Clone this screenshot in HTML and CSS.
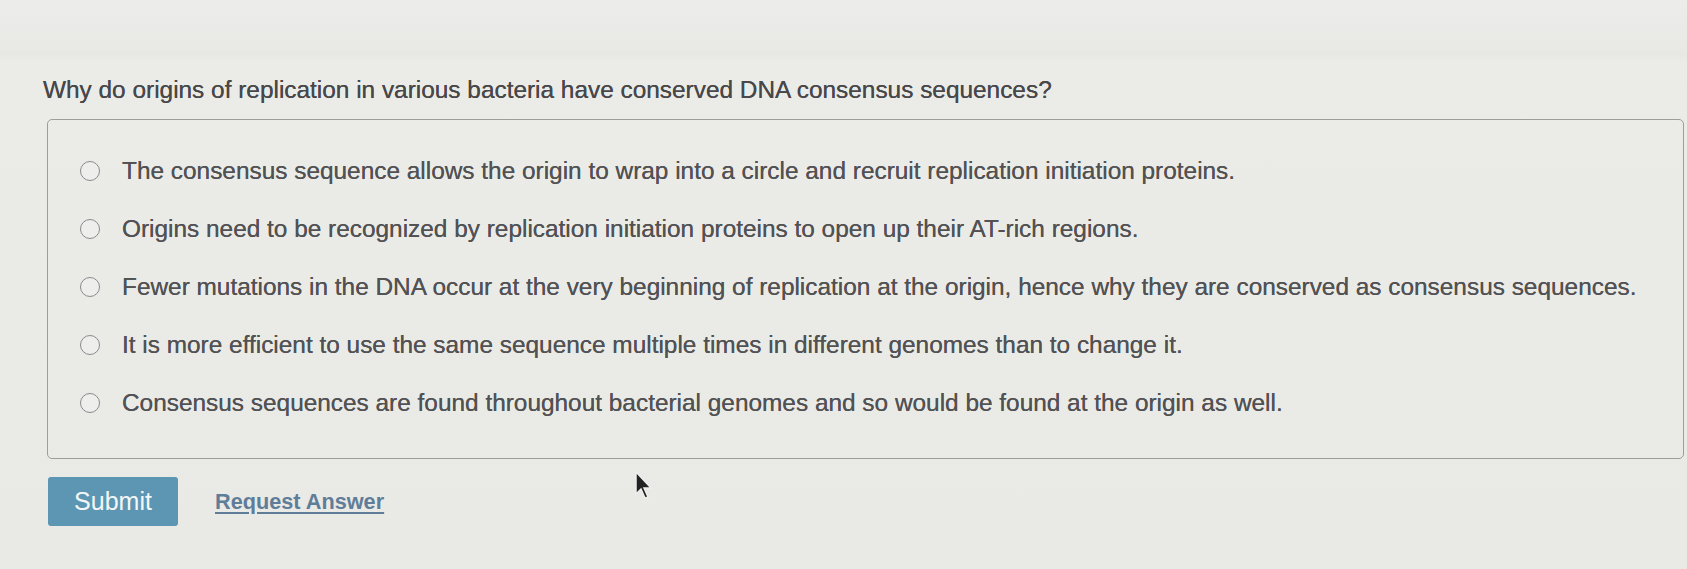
FILE: index.html
```html
<!DOCTYPE html>
<html>
<head>
<meta charset="utf-8">
<link rel="stylesheet" href="styles.css">
</head>
<body>
<div class="page">
  <p class="question">Why do origins of replication in various bacteria have conserved DNA consensus sequences?</p>
  <div class="choices">
    <label class="choice"><span class="radio"></span><span class="txt">The consensus sequence allows the origin to wrap into a circle and recruit replication initiation proteins.</span></label>
    <label class="choice"><span class="radio"></span><span class="txt">Origins need to be recognized by replication initiation proteins to open up their AT-rich regions.</span></label>
    <label class="choice"><span class="radio"></span><span class="txt">Fewer mutations in the DNA occur at the very beginning of replication at the origin, hence why they are conserved as consensus sequences.</span></label>
    <label class="choice"><span class="radio"></span><span class="txt">It is more efficient to use the same sequence multiple times in different genomes than to change it.</span></label>
    <label class="choice"><span class="radio"></span><span class="txt">Consensus sequences are found throughout bacterial genomes and so would be found at the origin as well.</span></label>
  </div>
  <div class="actions">
    <button class="submit">Submit</button>
    <a class="request" href="#">Request Answer</a>
  </div>
</div>
<svg class="cursor" width="22" height="30" viewBox="0 0 22 30"><path d="M2 2 L2 24 L7 19 L11 28 L14 27 L10 18 L17 18 Z" fill="#222" stroke="#eee" stroke-width="1.5"/></svg>
</body>
</html>
```
FILE: styles.css
```css
html, body {
  margin: 0;
  padding: 0;
  background: #e8e8e5;
  font-family: "Liberation Sans", Arial, sans-serif;
  color: #505052;
}
.page {
  padding: 75px 3px 0 43px;
  height: 569px;
  box-sizing: border-box;
  background: linear-gradient(180deg, #ececea 0px, #e9e9e6 48px, #e7e7e4 54px, #ebebe8 62px, #e9e9e6 569px);
}
.question {
  margin: 0;
  font-size: 24.4px;
  line-height: 29px;
  color: #48484a;
  text-shadow: 0 0 0.4px #48484a;
}
.choices {
  margin: 15px 0 0 4px;
  border: 1.5px solid #9d9d9c;
  border-radius: 5px;
  padding: 30px 0 35px 0;
  display: flex;
  flex-direction: column;
  gap: 17px;
}
.choice {
  display: flex;
  align-items: center;
  height: 41px;
  padding-left: 32px;
  font-size: 24.4px;
  color: #525254;
  text-shadow: 0 0 0.4px #525254;
  white-space: nowrap;
}
.radio {
  width: 20px;
  height: 20px;
  border: 1.5px solid #8a8a8c;
  border-radius: 50%;
  box-sizing: border-box;
  margin-right: 22px;
  flex: none;
  background: #eeeeec;
}
.actions {
  display: flex;
  align-items: center;
  margin: 18px 0 0 5px;
  gap: 37px;
}
.submit {
  width: 130px;
  height: 49px;
  background: #5d96b3;
  border: none;
  border-radius: 3px;
  color: #f4f6f7;
  font-family: "Liberation Sans", Arial, sans-serif;
  font-size: 25px;
  padding: 0;
}
.request {
  font-size: 21.7px;
  font-weight: bold;
  color: #5f7d98;
  text-decoration: underline;
  text-underline-offset: 3px;
}
.cursor {
  position: absolute;
  left: 634px;
  top: 470px;
}
```
